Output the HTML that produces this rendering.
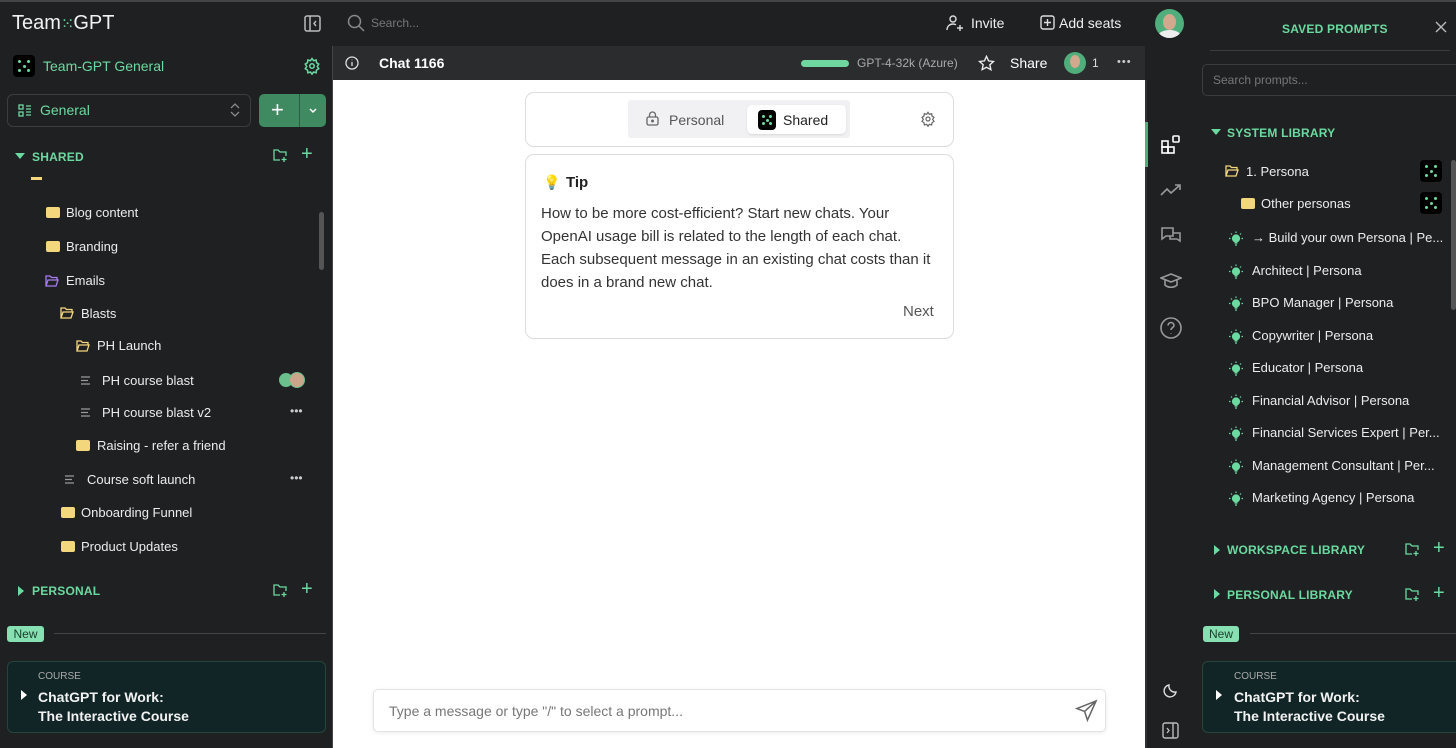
<!DOCTYPE html>
<html><head><meta charset="utf-8"><style>
*{box-sizing:border-box;margin:0;padding:0}
body{width:1456px;height:748px;overflow:hidden;background:#1f2022;font-family:"Liberation Sans",sans-serif;color:#e8e8e8;position:relative}
.a{position:absolute}
.g{color:#6bdaa0}
.t{font-size:13px;color:#ececec;white-space:nowrap}
.hd{font-size:12px;font-weight:bold;color:#6bdaa0;letter-spacing:.2px}
svg{display:block}
.fold{width:14px;height:11px;background:#f3d77d;border-radius:2px}
.logo{width:22px;height:22px;background:#000;border-radius:4px;position:absolute}
.logo i{position:absolute;width:3px;height:3px;background:#6bdaa0;border-radius:50%}
.pl div{position:relative;padding-left:24px;height:32.5px}
.pl svg{position:absolute;left:0;top:9px}
</style></head><body>
<div class="a" style="left:0;top:0;width:1456px;height:2px;background:#444"></div>
<!-- left sidebar -->
<div class="a" style="left:12px;top:12px;font-size:20px;color:#f2f2f2">Team<span class="g" style="font-size:16px;letter-spacing:-1px">⁙</span>GPT</div>
<svg class="a" style="left:304px;top:15px" width="17" height="17" viewBox="0 0 17 17" fill="none" stroke="#bbb" stroke-width="1.5"><rect x="1" y="1" width="15" height="15" rx="2"/><path d="M6 1v15M12 6l-2 2.5 2 2.5"/></svg>
<div class="logo" style="left:13px;top:55px"><i style="left:5px;top:5px"></i><i style="left:14px;top:5px"></i><i style="left:9.5px;top:9.5px"></i><i style="left:5px;top:14px"></i><i style="left:14px;top:14px"></i></div>
<div class="a g" style="left:43px;top:58px;font-size:14px">Team-GPT General</div>
<svg class="a" style="left:303px;top:57px" width="18" height="18" viewBox="0 0 24 24" fill="none" stroke="#6bdaa0" stroke-width="2"><circle cx="12" cy="12" r="3"/><path d="M12 2l2 3 3.5-1 .5 3.5 3 2-2 3 2 3-3 2-.5 3.5-3.5-1-2 3-2-3-3.5 1-.5-3.5-3-2 2-3-2-3 3-2 .5-3.5 3.5 1z"/></svg>
<div class="a" style="left:7px;top:94px;width:244px;height:33px;border:1px solid #3a3c3e;border-radius:6px"></div>
<svg class="a" style="left:18px;top:104px" width="14" height="13" viewBox="0 0 14 13" fill="none" stroke="#6bdaa0" stroke-width="1.3"><rect x="1" y="1" width="4" height="4"/><rect x="1" y="8" width="4" height="4"/><path d="M8 2h5M8 5h5M8 8h5M8 11h5"/></svg>
<div class="a g" style="left:40px;top:102px;font-size:14px">General</div>
<svg class="a" style="left:229px;top:102px" width="12" height="16" viewBox="0 0 12 16" fill="none" stroke="#888" stroke-width="1.3"><path d="M2 6l4-4 4 4M2 10l4 4 4-4"/></svg>
<div class="a" style="left:259px;top:94px;width:67px;height:33px;background:#3f8a60;border-radius:5px"></div>
<div class="a" style="left:299px;top:94px;width:1px;height:33px;background:#2c5e42"></div>
<div class="a" style="left:271px;top:97px;font-size:22px;color:#fff">+</div>
<svg class="a" style="left:308px;top:107px" width="10" height="7" viewBox="0 0 10 7" fill="none" stroke="#fff" stroke-width="1.5"><path d="M2 2l3 3 3-3"/></svg>
<div class="a" style="left:15px;top:153px;width:0;height:0;border-left:5px solid transparent;border-right:5px solid transparent;border-top:6px solid #6bdaa0"></div>
<div class="a hd" style="left:32px;top:150px">SHARED</div>
<svg class="a" style="left:272px;top:148px" width="16" height="14" viewBox="0 0 16 14" fill="none" stroke="#6bdaa0" stroke-width="1.3"><path d="M8 12H2V2h4l2 2h6v4M12 9v5M9.5 11.5h5"/></svg>
<div class="a g" style="left:301px;top:143px;font-size:20px">+</div>
<div class="a" style="left:31px;top:177px;width:11px;height:3px;background:#f3d77d"></div>
<div class="a" style="left:319px;top:212px;width:5px;height:58px;background:#555;border-radius:3px"></div>
<div class="a" style="left:332px;top:46px;width:1px;height:702px;background:#444"></div>

<div class="fold a" style="left:46px;top:207px"></div><div class="a t" style="left:66px;top:205px">Blog content</div>
<div class="fold a" style="left:46px;top:241px"></div><div class="a t" style="left:66px;top:239px">Branding</div>
<svg class="a" style="left:45px;top:275px" width="14" height="12" viewBox="0 0 14 12" fill="none" stroke="#a77df0" stroke-width="1.3"><path d="M1 11V1h4l1.5 1.5H12v2M1 11l2-6h10l-2 6z"/></svg><div class="a t" style="left:66px;top:273px">Emails</div>
<svg class="a" style="left:60px;top:307px" width="14" height="12" viewBox="0 0 14 12" fill="none" stroke="#f3d77d" stroke-width="1.3"><path d="M1 11V1h4l1.5 1.5H12v2M1 11l2-6h10l-2 6z"/></svg><div class="a t" style="left:81px;top:306px">Blasts</div>
<svg class="a" style="left:76px;top:340px" width="14" height="12" viewBox="0 0 14 12" fill="none" stroke="#f3d77d" stroke-width="1.3"><path d="M1 11V1h4l1.5 1.5H12v2M1 11l2-6h10l-2 6z"/></svg><div class="a t" style="left:97px;top:338px">PH Launch</div>
<svg class="a" style="left:81px;top:376px" width="10" height="9" viewBox="0 0 10 9" stroke="#999" stroke-width="1.2"><path d="M0 1h9M0 4.5h7M0 8h9"/></svg><div class="a t" style="left:102px;top:373px">PH course blast</div>
<div class="a" style="left:278px;top:372px;width:16px;height:16px;border-radius:50%;background:#6bbf8c;border:1px solid #222"></div><div class="a" style="left:289px;top:372px;width:16px;height:16px;border-radius:50%;background:#c9a58a;border:1px solid #6bbf8c"></div>
<svg class="a" style="left:81px;top:408px" width="10" height="9" viewBox="0 0 10 9" stroke="#999" stroke-width="1.2"><path d="M0 1h9M0 4.5h7M0 8h9"/></svg><div class="a t" style="left:102px;top:405px">PH course blast v2</div>
<div class="a" style="left:290px;top:404px;font-size:12px;color:#ccc">•••</div>
<div class="fold a" style="left:76px;top:440px"></div><div class="a t" style="left:97px;top:438px">Raising - refer a friend</div>
<svg class="a" style="left:65px;top:475px" width="10" height="9" viewBox="0 0 10 9" stroke="#999" stroke-width="1.2"><path d="M0 1h9M0 4.5h7M0 8h9"/></svg><div class="a t" style="left:87px;top:472px">Course soft launch</div>
<div class="a" style="left:290px;top:471px;font-size:12px;color:#ccc">•••</div>
<div class="fold a" style="left:61px;top:507px"></div><div class="a t" style="left:81px;top:505px">Onboarding Funnel</div>
<div class="fold a" style="left:61px;top:541px"></div><div class="a t" style="left:81px;top:539px">Product Updates</div>
<div class="a" style="left:18px;top:586px;width:0;height:0;border-top:5px solid transparent;border-bottom:5px solid transparent;border-left:6px solid #6bdaa0"></div>
<div class="a hd" style="left:32px;top:584px">PERSONAL</div>
<svg class="a" style="left:272px;top:583px" width="16" height="14" viewBox="0 0 16 14" fill="none" stroke="#6bdaa0" stroke-width="1.3"><path d="M8 12H2V2h4l2 2h6v4M12 9v5M9.5 11.5h5"/></svg>
<div class="a g" style="left:301px;top:578px;font-size:20px">+</div>
<div class="a" style="left:7px;top:626px;width:37px;height:16px;background:#87e0b2;border-radius:3px;color:#1a3d2a;font-size:12px;text-align:center;line-height:16px">New</div>
<div class="a" style="left:54px;top:633px;width:272px;height:1px;background:#444"></div>
<div class="a" style="left:7px;top:661px;width:319px;height:72px;background:#122526;border:1px solid #24453a;border-radius:6px"></div>
<div class="a" style="left:38px;top:671px;font-size:10px;color:#aaa">COURSE</div>
<div class="a" style="left:21px;top:690px;width:0;height:0;border-top:5px solid transparent;border-bottom:5px solid transparent;border-left:6px solid #fff"></div>
<div class="a" style="left:38px;top:688px;font-size:14px;font-weight:bold;color:#f2f2f2;line-height:19px">ChatGPT for Work:<br>The Interactive Course</div>

<!-- top bar -->
<svg class="a" style="left:347px;top:14px" width="18" height="18" viewBox="0 0 18 18" fill="none" stroke="#888" stroke-width="1.5"><circle cx="7.5" cy="7.5" r="6"/><path d="M12 12l5 5"/></svg>
<div class="a" style="left:371px;top:16px;font-size:12px;color:#777">Search...</div>
<svg class="a" style="left:946px;top:14px" width="18" height="18" viewBox="0 0 18 18" fill="none" stroke="#ddd" stroke-width="1.4"><circle cx="7" cy="5" r="3"/><path d="M1 16c0-4 3-6 6-6 1 0 2 .3 3 .8M14 11v6M11 14h6"/></svg>
<div class="a" style="left:971px;top:15px;font-size:14px;color:#eee">Invite</div>
<svg class="a" style="left:1040px;top:15px" width="15" height="15" viewBox="0 0 15 15" fill="none" stroke="#ddd" stroke-width="1.4"><rect x="1" y="1" width="13" height="13" rx="2"/><path d="M7.5 4v7M4 7.5h7"/></svg>
<div class="a" style="left:1059px;top:15px;font-size:14px;color:#eee">Add seats</div>
<div class="a" style="left:1155px;top:9px;width:29px;height:29px;border-radius:50%;background:#4fae7b;overflow:hidden"><div style="position:absolute;left:8px;top:5px;width:13px;height:16px;border-radius:50%;background:#d4a88c"></div><div style="position:absolute;left:4px;top:21px;width:21px;height:10px;border-radius:50%;background:#eee"></div></div>

<!-- chat header -->
<div class="a" style="left:333px;top:46px;width:812px;height:34px;background:#2b2c2e"></div>
<svg class="a" style="left:345px;top:56px" width="14" height="14" viewBox="0 0 14 14" fill="none" stroke="#ddd" stroke-width="1.3"><circle cx="7" cy="7" r="6"/><path d="M7 6v4M7 3.8v.5"/></svg>
<div class="a" style="left:379px;top:55px;font-size:14px;font-weight:bold;color:#fff">Chat 1166</div>
<div class="a" style="left:801px;top:60px;width:48px;height:7px;background:#6fd69f;border-radius:4px"></div>
<div class="a" style="left:857px;top:56px;font-size:12px;color:#aaa">GPT-4-32k (Azure)</div>
<svg class="a" style="left:978px;top:55px" width="17" height="16" viewBox="0 0 24 23" fill="none" stroke="#eee" stroke-width="2"><path d="M12 2l3 6.5 7 .8-5.2 4.8 1.5 7L12 17.6 5.7 21l1.5-7L2 9.3l7-.8z"/></svg>
<div class="a" style="left:1010px;top:55px;font-size:14px;color:#fff">Share</div>
<div class="a" style="left:1064px;top:52px;width:22px;height:22px;border-radius:50%;background:#4fae7b;overflow:hidden"><div style="position:absolute;left:6px;top:3px;width:10px;height:13px;border-radius:50%;background:#d4a88c"></div></div>
<div class="a" style="left:1092px;top:56px;font-size:12px;color:#ddd">1</div>
<div class="a" style="left:1117px;top:56px;font-size:11px;color:#ccc;letter-spacing:1px">•••</div>

<!-- main -->
<div class="a" style="left:333px;top:80px;width:812px;height:668px;background:#fff"></div>
<div class="a" style="left:525px;top:92px;width:429px;height:55px;border:1px solid #ddd;border-radius:9px"></div>
<div class="a" style="left:628px;top:100px;width:222px;height:38px;background:#f1f1f3;border-radius:3px"></div>
<div class="a" style="left:747px;top:105px;width:99px;height:29px;background:#fff;border-radius:5px;box-shadow:0 1px 2px rgba(0,0,0,.1)"></div>
<svg class="a" style="left:646px;top:111px" width="13" height="15" viewBox="0 0 13 15" fill="none" stroke="#666" stroke-width="1.3"><rect x="1" y="6" width="11" height="8" rx="1.5"/><path d="M3.5 6V4a3 3 0 016 0v2"/><circle cx="6.5" cy="10" r=".8" fill="#666"/></svg>
<div class="a" style="left:669px;top:112px;font-size:14px;color:#555">Personal</div>
<div class="logo" style="left:758px;top:110px;width:18px;height:20px"><i style="left:4px;top:5px"></i><i style="left:11px;top:5px"></i><i style="left:7.5px;top:8.5px"></i><i style="left:4px;top:12px"></i><i style="left:11px;top:12px"></i></div>
<div class="a" style="left:783px;top:112px;font-size:14px;color:#222">Shared</div>
<svg class="a" style="left:920px;top:111px" width="16" height="16" viewBox="0 0 24 24" fill="none" stroke="#666" stroke-width="1.8"><circle cx="12" cy="12" r="3"/><path d="M12 2l2 3 3.5-1 .5 3.5 3 2-2 3 2 3-3 2-.5 3.5-3.5-1-2 3-2-3-3.5 1-.5-3.5-3-2 2-3-2-3 3-2 .5-3.5 3.5 1z"/></svg>
<div class="a" style="left:525px;top:154px;width:429px;height:185px;border:1px solid #ddd;border-radius:9px"></div>
<div class="a" style="left:543px;top:174px;font-size:14px">💡</div>
<div class="a" style="left:566px;top:174px;font-size:15px;font-weight:bold;color:#222">Tip</div>
<div class="a" style="left:541px;top:202px;width:390px;font-size:15px;line-height:23px;color:#333">How to be more cost-efficient? Start new chats. Your OpenAI usage bill is related to the length of each chat. Each subsequent message in an existing chat costs than it does in a brand new chat.</div>
<div class="a" style="left:903px;top:303px;font-size:15px;color:#555">Next</div>
<div class="a" style="left:373px;top:689px;width:733px;height:43px;border:1px solid #e3e3e3;border-radius:5px;box-shadow:0 1px 4px rgba(0,0,0,.08)"></div>
<div class="a" style="left:389px;top:703px;font-size:14px;color:#777">Type a message or type "/" to select a prompt...</div>
<svg class="a" style="left:1075px;top:699px" width="23" height="23" viewBox="0 0 24 24" fill="none" stroke="#666" stroke-width="1.6"><path d="M22 2L2 10l8 3 3 9zM22 2L10 13"/></svg>

<!-- icon strip -->
<div class="a" style="left:1145px;top:80px;width:2px;height:668px;background:#2e2f31"></div>
<div class="a" style="left:1145px;top:122px;width:3px;height:45px;background:#4fae7b"></div>
<svg class="a" style="left:1161px;top:134px" width="21" height="21" viewBox="0 0 21 21" fill="none" stroke="#fff" stroke-width="1.6"><rect x="1" y="7" width="6" height="6"/><rect x="1" y="13" width="6" height="6"/><rect x="7" y="13" width="6" height="6"/><rect x="12" y="2" width="6" height="6" rx="1"/></svg>
<svg class="a" style="left:1160px;top:183px" width="22" height="14" viewBox="0 0 22 14" fill="none" stroke="#999" stroke-width="1.6"><path d="M1 12l6-6 4 4 9-8M15 2h5v5"/></svg>
<svg class="a" style="left:1160px;top:226px" width="22" height="20" viewBox="0 0 22 20" fill="none" stroke="#999" stroke-width="1.6"><path d="M2 2h11v8H6l-4 3zM13 7h7v8l-3-2h-7v-3"/></svg>
<svg class="a" style="left:1160px;top:272px" width="22" height="17" viewBox="0 0 22 17" fill="none" stroke="#999" stroke-width="1.6"><path d="M1 6l10-4 10 4-10 4zM5 8v5c3 3 9 3 12 0V8"/></svg>
<svg class="a" style="left:1160px;top:317px" width="22" height="22" viewBox="0 0 22 22" fill="none" stroke="#999" stroke-width="1.6"><circle cx="11" cy="11" r="10"/><path d="M8 8.5a3 3 0 116 0c0 2-3 2-3 4.5M11 16v.5"/></svg>
<svg class="a" style="left:1163px;top:683px" width="15" height="15" viewBox="0 0 15 15" fill="none" stroke="#ddd" stroke-width="1.4"><path d="M13 9A6 6 0 016 2a6 6 0 107 7z"/></svg>
<svg class="a" style="left:1162px;top:722px" width="17" height="17" viewBox="0 0 17 17" fill="none" stroke="#bbb" stroke-width="1.4"><rect x="1" y="1" width="15" height="15" rx="2"/><path d="M11 1v15M5 6l2 2.5-2 2.5"/></svg>

<!-- right panel -->
<div class="a hd" style="left:1282px;top:22px">SAVED PROMPTS</div>
<svg class="a" style="left:1435px;top:21px" width="12" height="12" viewBox="0 0 12 12" stroke="#bbb" stroke-width="1.4"><path d="M1 1l10 10M11 1L1 11"/></svg>
<div class="a" style="left:1210px;top:50px;width:240px;height:1px;background:#3a3c3e"></div>
<div class="a" style="left:1202px;top:64px;width:260px;height:32px;border:1px solid #3a3c3e;border-radius:5px"></div>
<div class="a" style="left:1213px;top:73px;font-size:12px;color:#777">Search prompts...</div>
<div class="a" style="left:1211px;top:129px;width:0;height:0;border-left:5px solid transparent;border-right:5px solid transparent;border-top:6px solid #6bdaa0"></div>
<div class="a hd" style="left:1227px;top:126px">SYSTEM LIBRARY</div>
<svg class="a" style="left:1225px;top:165px" width="14" height="12" viewBox="0 0 14 12" fill="none" stroke="#f3d77d" stroke-width="1.3"><path d="M1 11V1h4l1.5 1.5H12v2M1 11l2-6h10l-2 6z"/></svg>
<div class="a t" style="left:1246px;top:164px">1. Persona</div>
<div class="logo" style="left:1420px;top:160px"><i style="left:5px;top:5px"></i><i style="left:14px;top:5px"></i><i style="left:9.5px;top:9.5px"></i><i style="left:5px;top:14px"></i><i style="left:14px;top:14px"></i></div>
<div class="fold a" style="left:1241px;top:198px"></div><div class="a t" style="left:1261px;top:196px">Other personas</div>
<div class="logo" style="left:1420px;top:192px"><i style="left:5px;top:5px"></i><i style="left:14px;top:5px"></i><i style="left:9.5px;top:9.5px"></i><i style="left:5px;top:14px"></i><i style="left:14px;top:14px"></i></div>
<div class="a" style="left:1451px;top:160px;width:5px;height:150px;background:#555;border-radius:3px"></div>
<div class="a pl" style="left:1228px;top:222px;line-height:32.5px;font-size:13px;color:#ececec;white-space:nowrap">
<div><svg width="16" height="16" viewBox="0 0 16 16" fill="#6bdaa0" stroke="#6bdaa0" stroke-width="1.2"><circle cx="8" cy="7.5" r="3.5"/><path d="M6.5 12h3M7 14h2M8 0.5v1.5M1 7.5h1.5M13.5 7.5H15M3 2.5l1 1M13 2.5l-1 1" fill="none"/></svg>→ Build your own Persona | Pe...</div>
<div><svg width="16" height="16" viewBox="0 0 16 16" fill="#6bdaa0" stroke="#6bdaa0" stroke-width="1.2"><circle cx="8" cy="7.5" r="3.5"/><path d="M6.5 12h3M7 14h2M8 0.5v1.5M1 7.5h1.5M13.5 7.5H15M3 2.5l1 1M13 2.5l-1 1" fill="none"/></svg>Architect | Persona</div>
<div><svg width="16" height="16" viewBox="0 0 16 16" fill="#6bdaa0" stroke="#6bdaa0" stroke-width="1.2"><circle cx="8" cy="7.5" r="3.5"/><path d="M6.5 12h3M7 14h2M8 0.5v1.5M1 7.5h1.5M13.5 7.5H15M3 2.5l1 1M13 2.5l-1 1" fill="none"/></svg>BPO Manager | Persona</div>
<div><svg width="16" height="16" viewBox="0 0 16 16" fill="#6bdaa0" stroke="#6bdaa0" stroke-width="1.2"><circle cx="8" cy="7.5" r="3.5"/><path d="M6.5 12h3M7 14h2M8 0.5v1.5M1 7.5h1.5M13.5 7.5H15M3 2.5l1 1M13 2.5l-1 1" fill="none"/></svg>Copywriter | Persona</div>
<div><svg width="16" height="16" viewBox="0 0 16 16" fill="#6bdaa0" stroke="#6bdaa0" stroke-width="1.2"><circle cx="8" cy="7.5" r="3.5"/><path d="M6.5 12h3M7 14h2M8 0.5v1.5M1 7.5h1.5M13.5 7.5H15M3 2.5l1 1M13 2.5l-1 1" fill="none"/></svg>Educator | Persona</div>
<div><svg width="16" height="16" viewBox="0 0 16 16" fill="#6bdaa0" stroke="#6bdaa0" stroke-width="1.2"><circle cx="8" cy="7.5" r="3.5"/><path d="M6.5 12h3M7 14h2M8 0.5v1.5M1 7.5h1.5M13.5 7.5H15M3 2.5l1 1M13 2.5l-1 1" fill="none"/></svg>Financial Advisor | Persona</div>
<div><svg width="16" height="16" viewBox="0 0 16 16" fill="#6bdaa0" stroke="#6bdaa0" stroke-width="1.2"><circle cx="8" cy="7.5" r="3.5"/><path d="M6.5 12h3M7 14h2M8 0.5v1.5M1 7.5h1.5M13.5 7.5H15M3 2.5l1 1M13 2.5l-1 1" fill="none"/></svg>Financial Services Expert | Per...</div>
<div><svg width="16" height="16" viewBox="0 0 16 16" fill="#6bdaa0" stroke="#6bdaa0" stroke-width="1.2"><circle cx="8" cy="7.5" r="3.5"/><path d="M6.5 12h3M7 14h2M8 0.5v1.5M1 7.5h1.5M13.5 7.5H15M3 2.5l1 1M13 2.5l-1 1" fill="none"/></svg>Management Consultant | Per...</div>
<div><svg width="16" height="16" viewBox="0 0 16 16" fill="#6bdaa0" stroke="#6bdaa0" stroke-width="1.2"><circle cx="8" cy="7.5" r="3.5"/><path d="M6.5 12h3M7 14h2M8 0.5v1.5M1 7.5h1.5M13.5 7.5H15M3 2.5l1 1M13 2.5l-1 1" fill="none"/></svg>Marketing Agency | Persona</div>
</div>
<div class="a" style="left:1214px;top:545px;width:0;height:0;border-top:5px solid transparent;border-bottom:5px solid transparent;border-left:6px solid #6bdaa0"></div>
<div class="a hd" style="left:1227px;top:543px">WORKSPACE LIBRARY</div>
<svg class="a" style="left:1404px;top:542px" width="16" height="14" viewBox="0 0 16 14" fill="none" stroke="#6bdaa0" stroke-width="1.3"><path d="M8 12H2V2h4l2 2h6v4M12 9v5M9.5 11.5h5"/></svg>
<div class="a g" style="left:1433px;top:537px;font-size:20px">+</div>
<div class="a" style="left:1214px;top:589px;width:0;height:0;border-top:5px solid transparent;border-bottom:5px solid transparent;border-left:6px solid #6bdaa0"></div>
<div class="a hd" style="left:1227px;top:588px">PERSONAL LIBRARY</div>
<svg class="a" style="left:1404px;top:587px" width="16" height="14" viewBox="0 0 16 14" fill="none" stroke="#6bdaa0" stroke-width="1.3"><path d="M8 12H2V2h4l2 2h6v4M12 9v5M9.5 11.5h5"/></svg>
<div class="a g" style="left:1433px;top:582px;font-size:20px">+</div>
<div class="a" style="left:1203px;top:626px;width:36px;height:16px;background:#87e0b2;border-radius:3px;color:#1a3d2a;font-size:12px;text-align:center;line-height:16px">New</div>
<div class="a" style="left:1250px;top:633px;width:206px;height:1px;background:#444"></div>
<div class="a" style="left:1202px;top:661px;width:260px;height:72px;background:#122526;border:1px solid #24453a;border-radius:6px"></div>
<div class="a" style="left:1234px;top:671px;font-size:10px;color:#aaa">COURSE</div>
<div class="a" style="left:1216px;top:690px;width:0;height:0;border-top:5px solid transparent;border-bottom:5px solid transparent;border-left:6px solid #fff"></div>
<div class="a" style="left:1234px;top:688px;font-size:14px;font-weight:bold;color:#f2f2f2;line-height:19px">ChatGPT for Work:<br>The Interactive Course</div>
</body></html>
